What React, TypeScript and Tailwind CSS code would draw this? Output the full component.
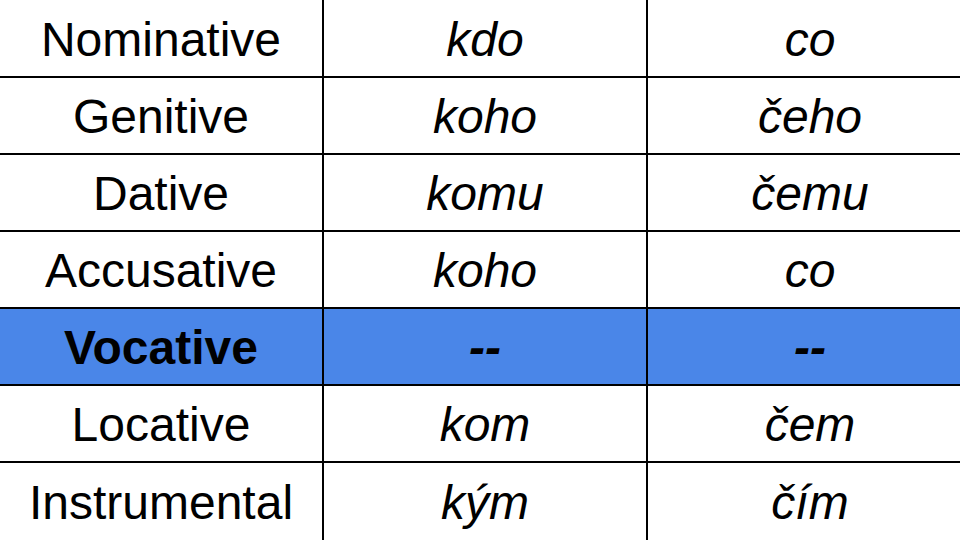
import React from "react";

const rows: [string, string, string, boolean][] = [
  ["Nominative", "kdo", "co", false],
  ["Genitive", "koho", "čeho", false],
  ["Dative", "komu", "čemu", false],
  ["Accusative", "koho", "co", false],
  ["Vocative", "--", "--", true],
  ["Locative", "kom", "čem", false],
  ["Instrumental", "kým", "čím", false],
];

export default function App() {
  return (
    <div className="w-[960px] h-[540px] overflow-hidden bg-white">
      <div
        className="w-[972px] grid grid-cols-[322px_322px_324px] grid-rows-[76px_75px_75px_75px_75px_75px_77px] gap-[2px] bg-black text-black text-[48px] leading-none"
        style={{ fontFamily: '"Liberation Sans", Arial, sans-serif' }}
      >
        {rows.map(([a, b, c, hl], i) => {
          const bg = hl ? "bg-[#4a86e8] font-bold" : "bg-white";
          return (
            <React.Fragment key={i}>
              <div className={`${bg} flex items-center justify-center pt-[3px]`}>{a}</div>
              <div className={`${bg} flex items-center justify-center italic pt-[3px]`}>{b}</div>
              <div className={`${bg} flex items-center justify-center italic pt-[3px]`}>{c}</div>
            </React.Fragment>
          );
        })}
      </div>
    </div>
  );
}
